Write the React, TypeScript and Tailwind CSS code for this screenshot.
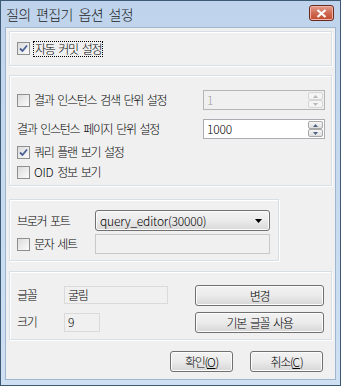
import React from 'react';

const font = { fontFamily: '"Noto Sans CJK KR", "Liberation Sans", sans-serif' };

function Check({ checked }: { checked?: boolean }) {
    return (
        <span className="flex h-[13px] w-[13px] shrink-0 items-center justify-center border border-[#8e8f8f] bg-gradient-to-br from-[#dcdcdc] to-[#fbfbfb]">
            {checked && (
                <svg width="9" height="9" viewBox="0 0 9 9">
                    <path d="M1 4.5 L3.5 7 L8 1.5" fill="none" stroke="#4a5f97" strokeWidth="1.8" />
                </svg>
            )}
        </span>
    );
}

function Group({ className, children }: { className?: string; children: React.ReactNode }) {
    return (
        <div className={`border border-[#d5dfe5] shadow-[inset_1px_1px_0_#fff,1px_1px_0_#fff] ${className ?? ''}`}>
            {children}
        </div>
    );
}

function Btn({ className, children }: { className?: string; children: React.ReactNode }) {
    return (
        <div className={`flex h-[21px] items-center justify-center rounded-[3px] border border-[#707070] bg-gradient-to-b from-[#f2f2f2] via-[#ebebeb] to-[#d6d6d6] text-[12px] text-black shadow-[inset_0_0_0_1px_#fcfcfc] ${className ?? ''}`}>
            {children}
        </div>
    );
}

function Spin({ value, disabled }: { value: string; disabled?: boolean }) {
    return (
        <div
            className={`flex h-[20px] w-[122px] items-center border pl-[3px] pr-[1px] ${
                disabled ? 'border-[#b5b5b5] bg-[#f0f0f0] text-[#a0a0a0]' : 'border-[#abadb3] bg-white text-black'
            }`}
        >
            <span className="flex-1 text-[12px] leading-none tracking-[-0.2px]">{value}</span>
            <div className="flex h-[16px] w-[15px] flex-col">
                {['M1 4 L3.5 1 L6 4Z', 'M1 1 L3.5 4 L6 1Z'].map((d) => (
                    <div
                        key={d}
                        className={`flex flex-1 items-center justify-center rounded-[2px] border ${
                            disabled ? 'border-[#d6d6d6] bg-[#f4f4f4]' : 'border-[#a8a8a8] bg-gradient-to-b from-[#f6f6f6] to-[#dedede]'
                        }`}
                    >
                        <svg width="7" height="5" viewBox="0 0 7 5">
                            <path d={d} fill={disabled ? '#b8b8b8' : '#4d6185'} />
                        </svg>
                    </div>
                ))}
            </div>
        </div>
    );
}

export default function App() {
    return (
        <div className="h-[386px] w-[341px] bg-white" style={font}>
            <div className="flex h-full w-full flex-col border border-[#3d5a75] bg-gradient-to-b from-[#bfd4ec] to-[#cfe0f3]">
                {/* title bar */}
                <div className="flex h-[26px] shrink-0 items-center justify-between pl-[5px] pr-[6px]">
                    <span className="text-[14px] font-light leading-none tracking-[-0.6px] [word-spacing:3px] text-[#1e1e1e]">질의 편집기 옵션 설정</span>
                    <div className="flex h-[16px] w-[25px] -translate-y-[1px] items-center justify-center rounded-[3px] border border-[#6b2a20] bg-gradient-to-b from-[#e5a08f] via-[#cf6a52] to-[#bf4a2f] shadow-[inset_0_0_0_1px_#f0b5a6]">
                        <svg width="11" height="9" viewBox="0 0 11 9">
                            <path d="M1.5 1 L9.5 8 M9.5 1 L1.5 8" stroke="#fff" strokeWidth="2.2" />
                        </svg>
                    </div>
                </div>

                {/* client area */}
                <div className="mx-[4px] mb-[5px] flex flex-1 flex-col border border-[#9eb6cf] bg-[#f0f0f0] px-[3px] pt-[3px] text-[12px] font-light tracking-[-1.3px] [word-spacing:2.5px] text-black">
                    <Group className="flex h-[35px] items-center pl-[7px]">
                        <Check checked />
                        <span className="ml-[3px] border border-dotted border-black px-[1px] leading-[14px]">자동 커밋 설정</span>
                    </Group>

                    <Group className="mt-[9px] flex h-[111px] flex-col pl-[7px] pr-[6px] pt-[14px]">
                        <div className="flex h-[20px] items-center">
                            <Check />
                            <span className="ml-[4px] flex-1">결과 인스턴스 검색 단위 설정</span>
                            <Spin value="1" disabled />
                        </div>
                        <div className="mt-[9px] flex h-[20px] items-center">
                            <span className="flex-1">결과 인스턴스 페이지 단위 설정</span>
                            <Spin value="1000" />
                        </div>
                        <div className="mt-[4px] flex h-[18px] items-center">
                            <Check checked />
                            <span className="ml-[4px]">쿼리 플랜 보기 설정</span>
                        </div>
                        <div className="mt-[2px] flex h-[18px] items-center">
                            <Check />
                            <span className="ml-[4px]">
                                <span className="tracking-[-0.2px]">OID</span> 정보 보기
                            </span>
                        </div>
                    </Group>

                    <Group className="mt-[13px] flex h-[62px] w-[270px] flex-col pl-[7px] pt-[10px]">
                        <div className="flex h-[21px] items-center">
                            <span className="w-[78px]">브로커 포트</span>
                            <div className="flex h-[21px] w-[175px] items-center justify-between rounded-[3px] border border-[#707070] bg-gradient-to-b from-[#f2f2f2] via-[#ebebeb] to-[#d8d8d8] pl-[4px] pr-[7px] shadow-[inset_0_0_0_1px_#fbfbfb]">
                                <span className="tracking-[-0.2px]">query_editor(30000)</span>
                                <svg width="7" height="4" viewBox="0 0 7 4">
                                    <path d="M0 0 L7 0 L3.5 4Z" fill="#000" />
                                </svg>
                            </div>
                        </div>
                        <div className="mt-[3px] flex h-[20px] items-center">
                            <div className="flex w-[78px] items-center">
                                <Check />
                                <span className="ml-[4px]">문자 세트</span>
                            </div>
                            <div className="h-[20px] w-[175px] border border-[#c9c9c9] bg-[#f0f0f0]" />
                        </div>
                    </Group>

                    <Group className="mt-[10px] flex h-[69px] justify-between pl-[7px] pr-[7px] pt-[13px]">
                        <div className="flex flex-col">
                            <div className="flex h-[20px] items-center">
                                <span className="w-[47px]">글꼴</span>
                                <div className="flex h-[18px] w-[104px] items-center border border-[#dadada] bg-[#f0f0f0] pl-[3px]">굴림</div>
                            </div>
                            <div className="mt-[7px] flex h-[20px] items-center">
                                <span className="w-[47px]">크기</span>
                                <div className="flex h-[19px] w-[36px] items-center border border-[#dadada] bg-[#f0f0f0] pl-[3px]">9</div>
                            </div>
                        </div>
                        <div className="flex flex-col">
                            <Btn className="w-[129px]">변경</Btn>
                            <Btn className="mt-[6px] w-[129px]">기본 글꼴 사용</Btn>
                        </div>
                    </Group>

                    <div className="mt-[11px] flex justify-end pr-[9px]">
                        <Btn className="w-[63px]">
                            확인(<span className="underline tracking-[-0.2px]">O</span>)
                        </Btn>
                        <Btn className="ml-[17px] w-[73px]">
                            취소(<span className="underline tracking-[-0.2px]">C</span>)
                        </Btn>
                    </div>
                </div>
            </div>
        </div>
    );
}
